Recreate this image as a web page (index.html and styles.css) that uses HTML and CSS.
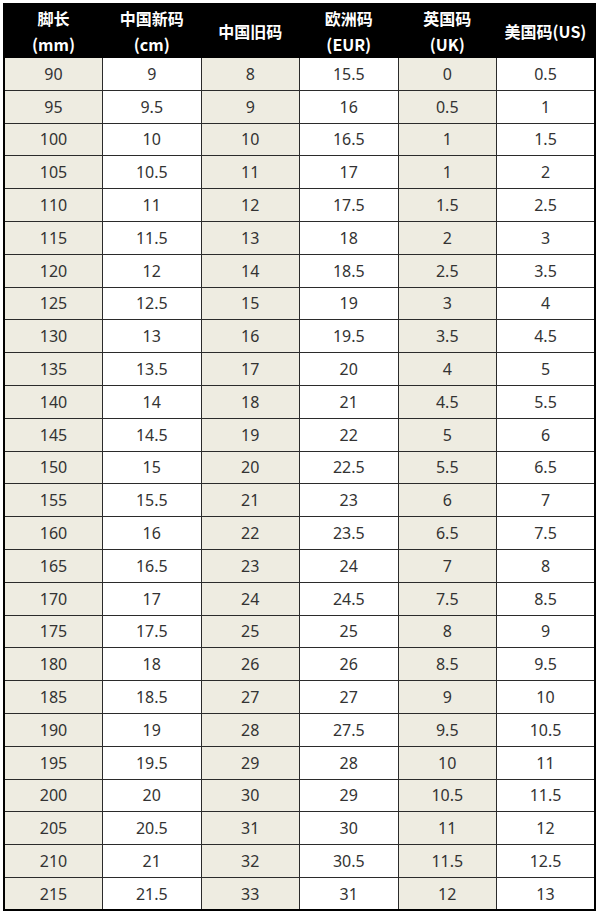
FILE: index.html
```html
<!DOCTYPE html>
<html lang="zh">
<head>
<meta charset="utf-8">
<title>儿童鞋码对照表</title>
<link rel="stylesheet" href="styles.css">
</head>
<body>
<table class="size-table">
  <colgroup>
    <col class="c-tan"><col class="c-white"><col class="c-tan"><col class="c-white"><col class="c-tan"><col class="c-white">
  </colgroup>
  <thead>
    <tr>
      <th>脚长<br>(mm)</th>
      <th>中国新码<br>(cm)</th>
      <th>中国旧码</th>
      <th>欧洲码<br>(EUR)</th>
      <th>英国码<br>(UK)</th>
      <th>美国码(US)</th>
    </tr>
  </thead>
  <tbody>
    <tr><td>90</td><td>9</td><td>8</td><td>15.5</td><td>0</td><td>0.5</td></tr>
    <tr><td>95</td><td>9.5</td><td>9</td><td>16</td><td>0.5</td><td>1</td></tr>
    <tr><td>100</td><td>10</td><td>10</td><td>16.5</td><td>1</td><td>1.5</td></tr>
    <tr><td>105</td><td>10.5</td><td>11</td><td>17</td><td>1</td><td>2</td></tr>
    <tr><td>110</td><td>11</td><td>12</td><td>17.5</td><td>1.5</td><td>2.5</td></tr>
    <tr><td>115</td><td>11.5</td><td>13</td><td>18</td><td>2</td><td>3</td></tr>
    <tr><td>120</td><td>12</td><td>14</td><td>18.5</td><td>2.5</td><td>3.5</td></tr>
    <tr><td>125</td><td>12.5</td><td>15</td><td>19</td><td>3</td><td>4</td></tr>
    <tr><td>130</td><td>13</td><td>16</td><td>19.5</td><td>3.5</td><td>4.5</td></tr>
    <tr><td>135</td><td>13.5</td><td>17</td><td>20</td><td>4</td><td>5</td></tr>
    <tr><td>140</td><td>14</td><td>18</td><td>21</td><td>4.5</td><td>5.5</td></tr>
    <tr><td>145</td><td>14.5</td><td>19</td><td>22</td><td>5</td><td>6</td></tr>
    <tr><td>150</td><td>15</td><td>20</td><td>22.5</td><td>5.5</td><td>6.5</td></tr>
    <tr><td>155</td><td>15.5</td><td>21</td><td>23</td><td>6</td><td>7</td></tr>
    <tr><td>160</td><td>16</td><td>22</td><td>23.5</td><td>6.5</td><td>7.5</td></tr>
    <tr><td>165</td><td>16.5</td><td>23</td><td>24</td><td>7</td><td>8</td></tr>
    <tr><td>170</td><td>17</td><td>24</td><td>24.5</td><td>7.5</td><td>8.5</td></tr>
    <tr><td>175</td><td>17.5</td><td>25</td><td>25</td><td>8</td><td>9</td></tr>
    <tr><td>180</td><td>18</td><td>26</td><td>26</td><td>8.5</td><td>9.5</td></tr>
    <tr><td>185</td><td>18.5</td><td>27</td><td>27</td><td>9</td><td>10</td></tr>
    <tr><td>190</td><td>19</td><td>28</td><td>27.5</td><td>9.5</td><td>10.5</td></tr>
    <tr><td>195</td><td>19.5</td><td>29</td><td>28</td><td>10</td><td>11</td></tr>
    <tr><td>200</td><td>20</td><td>30</td><td>29</td><td>10.5</td><td>11.5</td></tr>
    <tr><td>205</td><td>20.5</td><td>31</td><td>30</td><td>11</td><td>12</td></tr>
    <tr><td>210</td><td>21</td><td>32</td><td>30.5</td><td>11.5</td><td>12.5</td></tr>
    <tr><td>215</td><td>21.5</td><td>33</td><td>31</td><td>12</td><td>13</td></tr>
  </tbody>
</table>
</body>
</html>
```

FILE: styles.css
```css
html, body {
  margin: 0;
  padding: 0;
  background: #ffffff;
}

body {
  padding: 3px 0 0 3px;
}

.size-table {
  border-collapse: collapse;
  width: 593px;
  table-layout: fixed;
  border: 2px solid #000;
  font-family: "Noto Sans", "Noto Sans CJK SC", sans-serif;
}

.c-tan {
  background: #eeece1;
}

.c-white {
  background: #ffffff;
}

.size-table thead tr {
  height: 53px;
}

.size-table th {
  background: #000;
  color: #fff;
  font-family: "Noto Sans CJK SC", "Noto Sans", sans-serif;
  font-weight: 700;
  font-size: 16px;
  line-height: 26px;
  padding: 0;
  text-align: center;
  vertical-align: middle;
  border: 1px solid #000;
}

.size-table tbody tr {
  height: 32.8px;
}

.size-table td {
  padding: 0;
  text-align: center;
  vertical-align: middle;
  font-size: 16px;
  color: #333;
  border: 1px solid #2b2b2b;
}
```
